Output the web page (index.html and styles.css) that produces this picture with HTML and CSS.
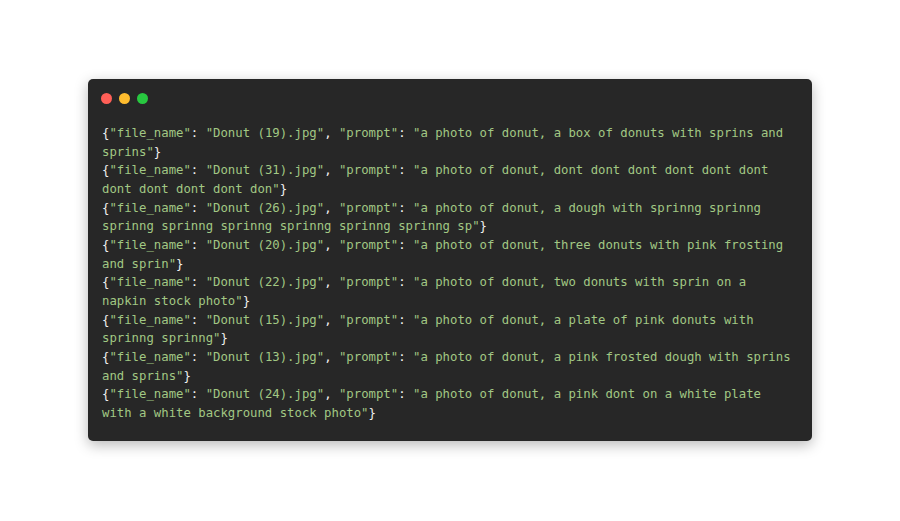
FILE: index.html
```html
<!DOCTYPE html>
<html>
<head>
<meta charset="utf-8">
<link rel="stylesheet" href="styles.css">
</head>
<body>
<div class="page">
  <div class="window">
    <div class="bar">
      <span class="dot red"></span>
      <span class="dot yellow"></span>
      <span class="dot green"></span>
    </div>
    <pre class="code"><span class="p">{</span><span class="s">"file_name"</span><span class="p">: </span><span class="s">"Donut (19).jpg"</span><span class="p">, </span><span class="s">"prompt"</span><span class="p">: </span><span class="s">"a photo of donut, a box of donuts with sprins and sprins"</span><span class="p">}</span>
<span class="p">{</span><span class="s">"file_name"</span><span class="p">: </span><span class="s">"Donut (31).jpg"</span><span class="p">, </span><span class="s">"prompt"</span><span class="p">: </span><span class="s">"a photo of donut, dont dont dont dont dont dont dont dont dont dont don"</span><span class="p">}</span>
<span class="p">{</span><span class="s">"file_name"</span><span class="p">: </span><span class="s">"Donut (26).jpg"</span><span class="p">, </span><span class="s">"prompt"</span><span class="p">: </span><span class="s">"a photo of donut, a dough with sprinng sprinng sprinng sprinng sprinng sprinng sprinng sprinng sp"</span><span class="p">}</span>
<span class="p">{</span><span class="s">"file_name"</span><span class="p">: </span><span class="s">"Donut (20).jpg"</span><span class="p">, </span><span class="s">"prompt"</span><span class="p">: </span><span class="s">"a photo of donut, three donuts with pink frosting and sprin"</span><span class="p">}</span>
<span class="p">{</span><span class="s">"file_name"</span><span class="p">: </span><span class="s">"Donut (22).jpg"</span><span class="p">, </span><span class="s">"prompt"</span><span class="p">: </span><span class="s">"a photo of donut, two donuts with sprin on a napkin stock photo"</span><span class="p">}</span>
<span class="p">{</span><span class="s">"file_name"</span><span class="p">: </span><span class="s">"Donut (15).jpg"</span><span class="p">, </span><span class="s">"prompt"</span><span class="p">: </span><span class="s">"a photo of donut, a plate of pink donuts with sprinng sprinng"</span><span class="p">}</span>
<span class="p">{</span><span class="s">"file_name"</span><span class="p">: </span><span class="s">"Donut (13).jpg"</span><span class="p">, </span><span class="s">"prompt"</span><span class="p">: </span><span class="s">"a photo of donut, a pink frosted dough with sprins and sprins"</span><span class="p">}</span>
<span class="p">{</span><span class="s">"file_name"</span><span class="p">: </span><span class="s">"Donut (24).jpg"</span><span class="p">, </span><span class="s">"prompt"</span><span class="p">: </span><span class="s">"a photo of donut, a pink dont on a white plate with a white background stock photo"</span><span class="p">}</span></pre>
  </div>
</div>
</body>
</html>
```
FILE: styles.css
```css
html, body {
  margin: 0;
  padding: 0;
  background: #ffffff;
}
.page {
  width: 900px;
  height: 521px;
  display: flex;
  justify-content: center;
  padding-top: 79px;
  box-sizing: border-box;
}
.window {
  width: 724px;
  height: 362px;
  box-sizing: border-box;
  background: #272727;
  border-radius: 5px;
  box-shadow: 0 4px 14px rgba(0, 0, 0, 0.28);
  padding: 13px 14px 0 14px;
}
.bar {
  display: flex;
  gap: 7px;
  height: 12px;
  align-items: center;
  margin-left: -1px;
}
.dot {
  width: 11px;
  height: 11px;
  border-radius: 50%;
  display: block;
}
.red { background: #ff5f57; }
.yellow { background: #febc2e; }
.green { background: #28c840; }
.code {
  margin: 20px 0 0 0;
  width: 692px;
  font-family: "DejaVu Sans Mono", monospace;
  font-size: 12.3px;
  line-height: 18.67px;
  white-space: pre-wrap;
  word-break: normal;
  overflow-wrap: normal;
  color: #a2c884;
}
.p { color: #f2f2f2; }
.s { color: #a2c884; }
```
